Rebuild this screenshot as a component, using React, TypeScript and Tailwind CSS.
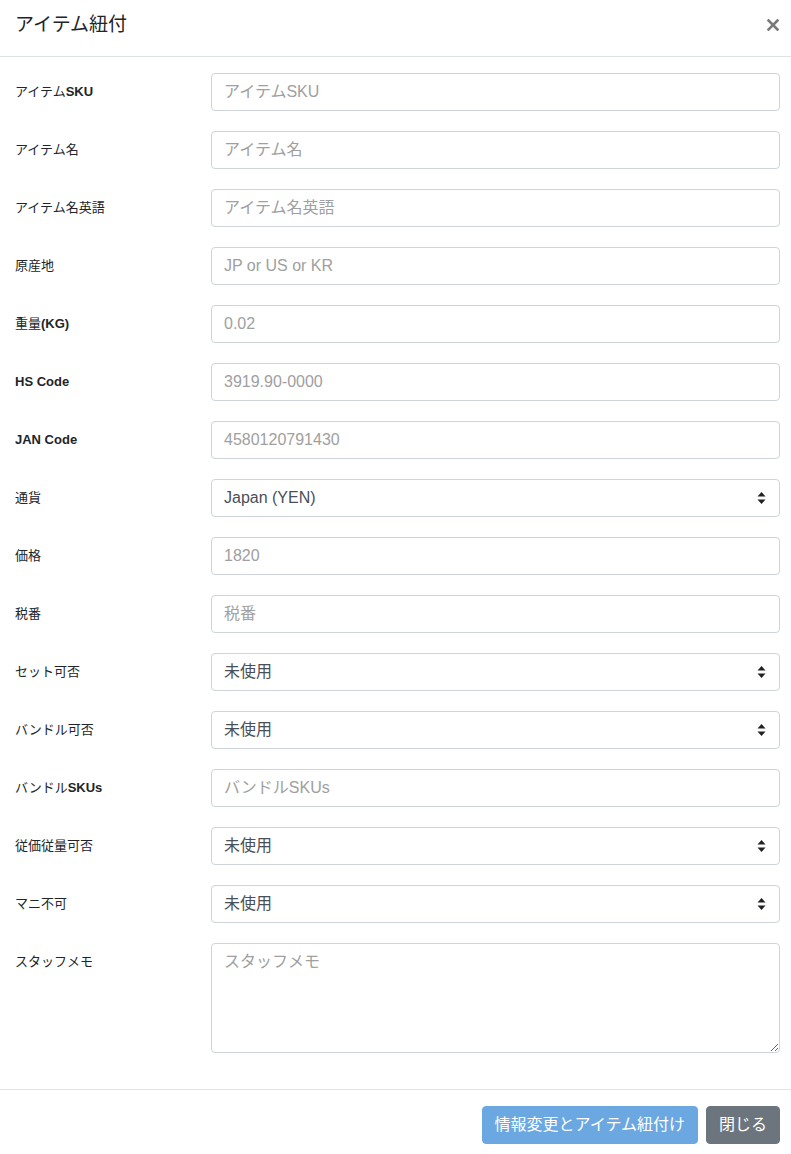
import React from "react";

const FONT = '"Liberation Sans", "Noto Sans CJK JP", sans-serif';

type Row =
  | { label: React.ReactNode; kind: "input"; placeholder: string }
  | { label: React.ReactNode; kind: "select"; value: string }
  | { label: React.ReactNode; kind: "textarea"; placeholder: string };

const B = ({ children }: { children: React.ReactNode }) => <span className="font-bold">{children}</span>;

const rows: Row[] = [
  { label: <>アイテム<B>SKU</B></>, kind: "input", placeholder: "アイテムSKU" },
  { label: <>アイテム名</>, kind: "input", placeholder: "アイテム名" },
  { label: <>アイテム名英語</>, kind: "input", placeholder: "アイテム名英語" },
  { label: <>原産地</>, kind: "input", placeholder: "JP or US or KR" },
  { label: <>重量<B>(KG)</B></>, kind: "input", placeholder: "0.02" },
  { label: <B>HS Code</B>, kind: "input", placeholder: "3919.90-0000" },
  { label: <B>JAN Code</B>, kind: "input", placeholder: "4580120791430" },
  { label: <>通貨</>, kind: "select", value: "Japan (YEN)" },
  { label: <>価格</>, kind: "input", placeholder: "1820" },
  { label: <>税番</>, kind: "input", placeholder: "税番" },
  { label: <>セット可否</>, kind: "select", value: "未使用" },
  { label: <>バンドル可否</>, kind: "select", value: "未使用" },
  { label: <>バンドル<B>SKUs</B></>, kind: "input", placeholder: "バンドルSKUs" },
  { label: <>従価従量可否</>, kind: "select", value: "未使用" },
  { label: <>マニ不可</>, kind: "select", value: "未使用" },
  { label: <>スタッフメモ</>, kind: "textarea", placeholder: "スタッフメモ" },
];

function Arrows() {
  return (
    <svg width="9" height="13" viewBox="0 0 9 13" className="absolute right-[13px] top-1/2 -translate-y-1/2">
      <path d="M4.5 0.5 L8.5 5 L0.5 5 Z" fill="#222" />
      <path d="M4.5 12.5 L8.5 8 L0.5 8 Z" fill="#222" />
    </svg>
  );
}

export default function App() {
  return (
    <div className="w-[791px] min-h-[1154px] bg-white text-[#212529]" style={{ fontFamily: FONT }}>
      {/* header */}
      <div className="h-[57px] border-b border-[#dee2e6] flex items-start justify-between pl-[15px] pr-[12px] pt-[10px]">
        <h5 className="text-[19px] leading-[30px] font-normal text-[#212529]">アイテム紐付</h5>
        <button className="mt-[9px] opacity-60" aria-label="close">
          <svg width="12" height="12" viewBox="0 0 12 12">
            <path d="M1.5 1.5 L10.5 10.5 M10.5 1.5 L1.5 10.5" stroke="#222" strokeWidth="2.6" strokeLinecap="square" />
          </svg>
        </button>
      </div>

      {/* body */}
      <div className="pt-[16px] pb-[16px] pl-[15px] pr-[11px] flex flex-col gap-[20px]">
        {rows.map((r, i) => (
          <div key={i} className="grid grid-cols-[196px_1fr]">
            <label className="text-[13px] leading-[19.5px] pt-[9px] text-[#212529]">{r.label}</label>
            {r.kind === "input" && (
              <input
                className="h-[38px] w-full rounded-[4px] border border-[#ced4da] px-[12px] text-[16px] text-[#495057] placeholder:text-[#a0a0a0] outline-none"
                placeholder={r.placeholder}
                style={{ fontFamily: FONT }}
              />
            )}
            {r.kind === "select" && (
              <div className="relative h-[38px] w-full rounded-[4px] border border-[#ced4da] px-[12px] flex items-center text-[16px] text-[#495057]">
                <span>{r.value}</span>
                <Arrows />
              </div>
            )}
            {r.kind === "textarea" && (
              <textarea
                className="h-[110px] w-full rounded-[4px] border border-[#ced4da] px-[12px] py-[6px] text-[16px] leading-[24px] text-[#495057] placeholder:text-[#a0a0a0] outline-none block"
                placeholder={r.placeholder}
                style={{ fontFamily: FONT }}
              />
            )}
          </div>
        ))}
      </div>

      {/* footer */}
      <div className="mt-[20px] border-t border-[#dee2e6] flex justify-end gap-[8px] pt-[16px] pb-[10px] pr-[11px]">
        <button className="h-[38px] rounded-[4px] bg-[#6ba8e1] px-[12px] text-[16px] text-white border border-[#6ba8e1]">
          情報変更とアイテム紐付け
        </button>
        <button className="h-[38px] rounded-[4px] bg-[#6c757d] px-[12px] text-[16px] text-white border border-[#6c757d]">
          閉じる
        </button>
      </div>
    </div>
  );
}
